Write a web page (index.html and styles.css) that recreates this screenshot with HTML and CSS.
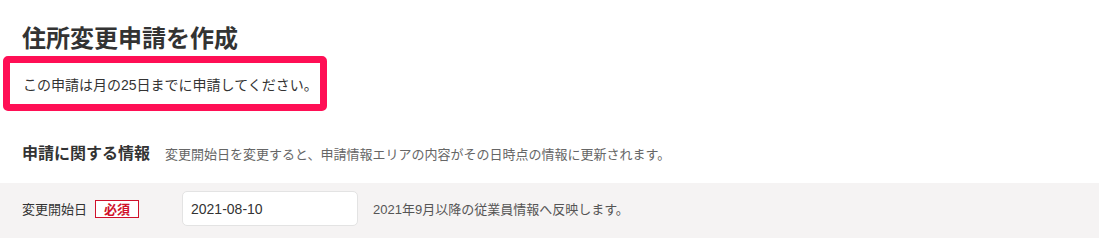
FILE: index.html
```html
<!DOCTYPE html>
<html lang="ja">
<head>
<meta charset="utf-8">
<link rel="stylesheet" href="styles.css">
</head>
<body>
<div class="page">
  <h1 class="title">住所変更申請を作成</h1>
  <div class="notice">この申請は月の25日までに申請してください。</div>
  <div class="section-head">
    <h2 class="section-title">申請に関する情報</h2>
    <span class="section-note">変更開始日を変更すると、申請情報エリアの内容がその日時点の情報に更新されます。</span>
  </div>
  <div class="form-band">
    <div class="form-row">
      <div class="label-cell">
        <span class="label">変更開始日</span>
        <span class="badge">必須</span>
      </div>
      <div class="input-box">2021-08-10</div>
      <span class="help">2021年9月以降の従業員情報へ反映します。</span>
    </div>
  </div>
</div>
</body>
</html>
```

FILE: styles.css
```css
* { box-sizing: border-box; }
html, body { margin: 0; padding: 0; background: #fff; }
body {
  font-family: "Liberation Sans", "Noto Sans CJK JP", sans-serif;
  color: #333;
}
.page { display: flex; flex-direction: column; }
.title {
  margin: 22px 0 0 22px;
  font-size: 24px;
  line-height: 34px;
  font-weight: 700;
  color: #333;
}
.notice {
  margin: 0 0 0 3px;
  width: 324px;
  height: 55px;
  border: 7px solid #ff0f55;
  border-radius: 5px;
  padding-left: 13px;
  display: flex;
  align-items: center;
  font-size: 14px;
  color: #333;
}
.section-head {
  margin: 32px 0 0 22px;
  display: flex;
  align-items: baseline;
  gap: 15px;
  height: 40px;
}
.section-title {
  margin: 0;
  font-size: 16px;
  font-weight: 700;
  line-height: 22px;
  color: #333;
}
.section-note {
  font-size: 13px;
  color: #666;
}
.form-band {
  background: #f5f3f3;
  padding: 8px 0 12px 22px;
}
.form-row {
  display: flex;
  align-items: center;
}
.label-cell {
  width: 160px;
  display: flex;
  align-items: center;
  gap: 8px;
}
.label { font-size: 13px; color: #333; }
.badge {
  width: 44px;
  height: 18px;
  border: 1px solid #d0112b;
  color: #d0112b;
  font-size: 13px;
  font-weight: 700;
  display: flex;
  align-items: center;
  justify-content: center;
  background: #fff;
}
.input-box {
  width: 176px;
  height: 35px;
  background: #fff;
  border: 1px solid #e3e3e3;
  border-radius: 5px;
  padding-left: 8px;
  display: flex;
  align-items: center;
  font-size: 14px;
  color: #333;
}
.help {
  margin-left: 15px;
  font-size: 13px;
  color: #555;
}
```
